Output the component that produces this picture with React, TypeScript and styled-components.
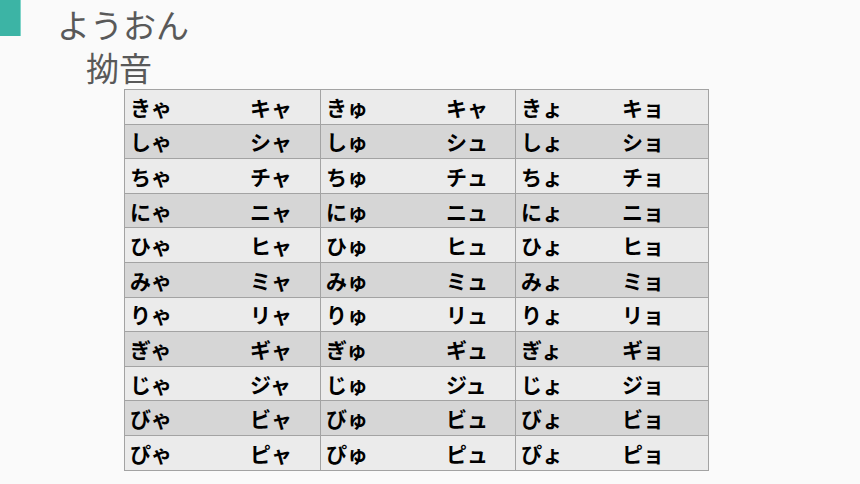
import React from "react";
import styled, { createGlobalStyle } from "styled-components";

const Global = createGlobalStyle`
  html, body { margin: 0; padding: 0; background: #fafafa; }
  body { font-family: "Noto Sans CJK JP", "Noto Sans", sans-serif; }
`;

const Page = styled.div`
  width: 860px;
  height: 484px;
  position: relative;
  overflow: hidden;
  background: #fafafa;
  display: flex;
  flex-direction: column;
`;

const Accent = styled.div`
  position: absolute;
  left: 0;
  top: 0;
  width: 20px;
  height: 36px;
  background: #3cb4a5;
  border-right: 1px solid #7ed3c8;
`;

const TitleBlock = styled.div`
  display: flex;
  flex-direction: column;
  padding: 6px 0 0 57px;
  color: #595959;
  font-family: "Noto Sans CJK JP", sans-serif;
  font-size: 33px;
  line-height: 36px;
  font-weight: 400;
`;

const Sub = styled.div`
  margin-left: 29px;
  margin-top: 7px;
`;

const Table = styled.div`
  margin: 4px 0 0 124px;
  width: 583px;
  border: 1px solid #a3a3a3;
  display: flex;
  flex-direction: column;
`;

const Row = styled.div<{ $alt: boolean }>`
  display: grid;
  grid-template-columns: 195px 195px 1fr;
  height: 33.6px;
  background: ${(p) => (p.$alt ? "#d6d6d6" : "#ebebeb")};
  & + & { border-top: 1px solid #a3a3a3; }
`;

const Cell = styled.div<{ $kataLeft: number }>`
  position: relative;
  display: flex;
  align-items: center;
  font-family: "Noto Sans CJK JP", sans-serif;
  font-weight: 700;
  font-size: 21px;
  color: #000;
  & + & { border-left: 1px solid #a3a3a3; }
  span.h { margin-left: 5px; }
  span.k { position: absolute; left: ${(p) => p.$kataLeft}px; }
`;

const rows: [string, string, string, string, string, string][] = [
  ["きゃ", "キャ", "きゅ", "キャ", "きょ", "キョ"],
  ["しゃ", "シャ", "しゅ", "シュ", "しょ", "ショ"],
  ["ちゃ", "チャ", "ちゅ", "チュ", "ちょ", "チョ"],
  ["にゃ", "ニャ", "にゅ", "ニュ", "にょ", "ニョ"],
  ["ひゃ", "ヒャ", "ひゅ", "ヒュ", "ひょ", "ヒョ"],
  ["みゃ", "ミャ", "みゅ", "ミュ", "みょ", "ミョ"],
  ["りゃ", "リャ", "りゅ", "リュ", "りょ", "リョ"],
  ["ぎゃ", "ギャ", "ぎゅ", "ギュ", "ぎょ", "ギョ"],
  ["じゃ", "ジャ", "じゅ", "ジュ", "じょ", "ジョ"],
  ["びゃ", "ビャ", "びゅ", "ビュ", "びょ", "ビョ"],
  ["ぴゃ", "ピャ", "ぴゅ", "ピュ", "ぴょ", "ピョ"],
];

const offsets = [125, 125, 106];

export default function App() {
  return (
    <>
      <Global />
      <Page>
        <Accent />
        <TitleBlock>
          <div>ようおん</div>
          <Sub>拗音</Sub>
        </TitleBlock>
        <Table>
          {rows.map((r, i) => (
            <Row key={i} $alt={i % 2 === 1}>
              {[0, 1, 2].map((c) => (
                <Cell key={c} $kataLeft={offsets[c]}>
                  <span className="h">{r[c * 2]}</span>
                  <span className="k">{r[c * 2 + 1]}</span>
                </Cell>
              ))}
            </Row>
          ))}
        </Table>
      </Page>
    </>
  );
}
